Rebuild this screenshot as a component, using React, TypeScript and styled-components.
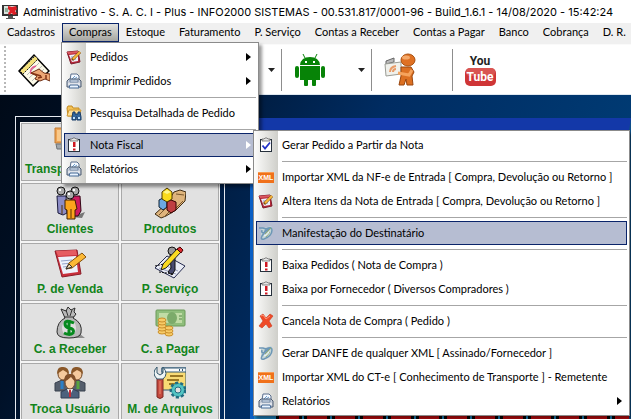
import React from "react";
import styled, { createGlobalStyle, css } from "styled-components";

const Global = createGlobalStyle`
  * { box-sizing: border-box; }
  html, body, #root { height: 100%; }
  body { margin: 0; overflow: hidden; font-family: Lato, "Liberation Sans", sans-serif; font-size: 11px; color: #000; background: #fff; }
  button { font: inherit; color: inherit; margin: 0; cursor: default; }
  ul { list-style: none; margin: 0; padding: 0; }
  svg { display: block; flex: none; }
`;

/* ---------- window ---------- */

const Window = styled.div`
  height: 100%;
  display: flex;
  flex-direction: column;
`;

const TitleBar = styled.header`
  height: 23px;
  display: flex;
  align-items: center;
  gap: 4px;
  padding: 0 2px;
  background: #fff;
`;

const Title = styled.h1`
  margin: 0;
  font: 400 11px/20px Inter, "Open Sans", sans-serif;
  color: #000;
  white-space: nowrap;
`;

const MenuBar = styled.ul`
  height: 21px;
  display: flex;
  background: #f0f0f0;
  white-space: nowrap;
`;

const MenuSlot = styled.li`
  position: relative;
  display: flex;
  align-items: flex-start;
`;

const MenuButton = styled.button<{ $open?: boolean }>`
  height: 19px;
  padding: 0 6px 2px;
  line-height: 16px;
  border: 1px solid transparent;
  background: none;
  ${(p) =>
    p.$open &&
    css`
      border-color: #0a246a;
      background: linear-gradient(#e2e2df, #a5a5a0);
    `}
`;

const ToolBar = styled.div`
  height: 51px;
  flex: none;
  display: flex;
  align-items: center;
  padding-left: 4px;
  background: #fff;
  border-top: 1px solid #fafafa;
  border-bottom: 1px solid #dfe8f0;
`;

const Grip = styled.span`
  width: 2px;
  height: 48px;
  margin-right: 12px;
  background: repeating-linear-gradient(#b8b8b8 0 2px, transparent 2px 4px);
`;

const ToolButton = styled.button`
  display: flex;
  padding: 0;
  border: 0;
  background: none;
`;

const DropButton = styled(ToolButton)<{ $gap: number }>`
  margin-left: ${(p) => p.$gap}px;
`;

const Divider = styled.span<{ $after: number; $before: number }>`
  width: 1px;
  height: 42px;
  margin: 0 ${(p) => p.$after}px 0 ${(p) => p.$before}px;
  background: #8d8d8d;
`;

/* ---------- desktop ---------- */

const Desktop = styled.main`
  flex: 1;
  min-height: 0;
  display: flex;
  padding: 21px 0 0 15px;
  gap: 25px;
  overflow: hidden;
  background: linear-gradient(115deg, #000a18 0%, #001128 18%, #002c62 50%, #00427c 100%);
`;

const Shortcuts = styled.nav`
  width: 210px;
  flex: none;
  padding: 5px 4px 0;
  border: 1px solid #e6eaf0;
  border-bottom: 0;
`;

const ShortcutGrid = styled.div`
  display: grid;
  grid-template-columns: 1fr 1fr;
  grid-auto-rows: 58px;
  gap: 2px;
  padding: 1px;
  background: #f4f4f4;
`;

const Shortcut = styled.button`
  display: flex;
  flex-direction: column;
  align-items: center;
  justify-content: space-between;
  padding: 2px 3px 3px;
  border: 1px solid #a9a9a9;
  background: #e1e1e1;
  color: #12841a;
  font: 700 12px/16px "Liberation Sans", Arial, sans-serif;
  white-space: nowrap;
`;

const ShortcutLabel = styled.span<{ $start?: boolean }>`
  align-self: ${(p) => (p.$start ? "flex-start" : "center")};
`;

const ChildWindow = styled.section`
  flex: 1;
  min-width: 0;
  margin-top: 2px;
  display: flex;
  flex-direction: column;
  justify-content: flex-end;
  border-top: 12px solid #1338a8;
  border-left: 4px solid #0b5fc4;
  border-right: 2px solid #0d4f88;
  background: #1d84c0;
`;

const RedStrip = styled.div`
  height: 5px;
  margin-left: 22px;
  background: repeating-linear-gradient(90deg, #000 0 3px, #c30d10 3px 23px, #000 23px 26px, #1d84c0 26px 28px);
`;

/* ---------- pop-up menus ---------- */

const Popup = styled.ul<{ $sub?: boolean }>`
  position: absolute;
  z-index: 2;
  top: ${(p) => (p.$sub ? "-3px" : "19px")};
  left: ${(p) => (p.$sub ? "189px" : "-1px")};
  width: ${(p) => (p.$sub ? "377px" : "198px")};
  padding: 2px;
  border: 1px solid #8b8b8b;
  background: linear-gradient(90deg, #fcfcfb 0, #cfcfca 24px, #fff 24px);
  box-shadow: 3px 3px 3px rgba(0, 0, 0, 0.4);
`;

const Entry = styled.li`
  position: relative;
`;

const EntryButton = styled.button<{ $active?: boolean }>`
  width: 100%;
  height: 24px;
  display: flex;
  align-items: center;
  gap: 8px;
  padding: 0 4px 0 1px;
  border: 1px solid transparent;
  background: none;
  text-align: left;
  white-space: nowrap;
  ${(p) =>
    p.$active &&
    css`
      border-color: #0a246a;
      background: #b6bdd2;
    `}
`;

const EntryText = styled.span`
  flex: 1;
  padding-bottom: 2px;
`;

const Rule = styled.li`
  height: 8px;
  padding: 4px 0 0 26px;
  &::before {
    content: "";
    display: block;
    height: 1px;
    background: #a6a6a6;
  }
`;

/* ---------- small icons, 16px ---------- */

const Small = ({ children }: { children: React.ReactNode }) => (
  <svg width="16" height="16" viewBox="0 0 16 16" aria-hidden="true">{children}</svg>
);

const EditIcon = () => (
  <Small>
    <path d="M1 3 12 2 14 13 5 15z" fill="#b9283a" stroke="#7d1c2c" />
    <path d="M3 6 12 5 12 12 6 13z" fill="#eef1fa" />
    <path d="M5 8h5M6 10h4" stroke="#8593c0" />
    <path d="M1 3 12 2 12 4 2 5z" fill="#db5960" />
    <path d="M6 11 14 3" stroke="#7b4a10" strokeWidth="3" />
    <path d="M7 10 14 3" stroke="#f9b93b" strokeWidth="2" />
  </Small>
);

const PrinterIcon = () => (
  <Small>
    <path d="M4 7 5 1h6l2 2v5" fill="#f5f9ff" stroke="#5a6e8c" />
    <path d="M6 6l3-3M7 7l4-3" stroke="#6a9ccc" />
    <path d="M1 8 3 6h10l2 2v6H1z" fill="#c5ccd8" stroke="#4b5a70" />
    <path d="M4 7h8v2H4z" fill="#e9f2ff" stroke="#7085a0" />
    <path d="M2 11h12" stroke="#fff" />
    <path d="M4 12h8l1 3H3z" fill="#eaf4ff" stroke="#476a96" />
  </Small>
);

const SearchFolderIcon = () => (
  <Small>
    <path d="M1 3 2 1h4l1 2h6v8H2z" fill="#f3c257" stroke="#c58a1f" />
    <path d="M1 11 3 5h12l-2 6z" fill="#ffe09a" stroke="#d19a33" />
    <path d="M7 7h2v2h3V7h2l1 5v3h-4v-3h-1v3H6v-3z" fill="#34679c" stroke="#173c68" />
    <path d="M7 12h2v2H7zM12 12h2v2h-2z" fill="#bfe0fa" />
  </Small>
);

const ClipboardBase = () => (
  <>
    <rect x="2.5" y="2.5" width="11" height="12" fill="#fff" stroke="#26303c" />
    <path d="M4 4V2h2l1-1h2l1 1h2v2z" fill="#e6e6e6" stroke="#555" strokeWidth=".7" />
  </>
);

const AlertIcon = () => (
  <Small>
    <ClipboardBase />
    <path d="M7 5h2.500v5H7zM7 11.500h2.500v2H7z" fill="#d01822" />
  </Small>
);

const CheckIcon = () => (
  <Small>
    <ClipboardBase />
    <path d="M4.500 8.500 7 11.500 12 5.500" fill="none" stroke="#2434c8" strokeWidth="1.800" />
  </Small>
);

const XmlIcon = () => (
  <Small>
    <rect y="3" width="16" height="11" fill="#f0711a" />
    <rect y="3" width="16" height="1" fill="#f99b51" />
    <text x="8" y="11" textAnchor="middle" fontFamily="Liberation Sans, sans-serif" fontSize="7" fontWeight="700" fill="#fff">XML</text>
  </Small>
);

const NfeIcon = () => (
  <Small>
    <path d="M3 4 13 1 15 4 12 12 5 15 3 10z" fill="#c4d6d7" />
    <path d="M1 3h4l3 1-2 4q-3 0-2-3M8 4q6-3 6 1 0 6-8 9-4 1-2-3 3-5 9-8" fill="none" stroke="#6d97b6" strokeWidth="1.500" />
    <path d="M7 9 13 3M8 12l4-5" stroke="#93ac75" />
    <path d="M6 11q4-1 5-4" fill="none" stroke="#f4f8f8" />
  </Small>
);

const CancelIcon = () => (
  <Small>
    <path d="M2 3 5 1 8 5 12 1 15 3 11 8 14 13 11 15 8 11 4 15 1 13 5 8z" fill="#ef4a27" stroke="#c9371d" strokeWidth=".6" />
    <path d="M3 3 5 2 8 6 12 3" fill="none" stroke="#ff9577" />
  </Small>
);

const SubArrow = ({ light }: { light?: boolean }) => (
  <svg width="5" height="8" viewBox="0 0 5 8" aria-hidden="true">
    <path d="M0 0 5 4 0 8z" fill={light ? "#fff" : "#000"} />
  </svg>
);

const DropArrow = () => (
  <svg width="7" height="4" viewBox="0 0 7 4" aria-hidden="true">
    <path d="M0 0h7L3.500 4z" fill="#222" />
  </svg>
);

/* ---------- large icons, 32px ---------- */

const Large = ({ children }: { children: React.ReactNode }) => (
  <svg width="32" height="34" viewBox="0 0 32 34" aria-hidden="true">{children}</svg>
);

const AppIcon = () => (
  <svg width="17" height="16" viewBox="0 0 17 16" aria-hidden="true">
    <path d="M0 1h16v11H0z" fill="#333" />
    <path d="M2 2h12v8H2z" fill="#d9e2dd" />
    <path d="M3 4h3v4H3z" fill="#8fae9a" />
    <path d="M6 2 10 3 14 2 15 5 13 7 15 10 11 11 10 9 7 11 6 9 8 7 6 5z" fill="#dc1e25" />
    <path d="M6 12h5v2h2v1H4v-1h2z" fill="#555" />
  </svg>
);

const NotepadIcon = () => (
  <Large>
    <path d="M1 18 16 2 31 18 15 33z" fill="#fdfbe8" stroke="#000" strokeWidth="1.500" />
    <path d="M2 18 17 3 20 6 5 21z" fill="#f3e07b" stroke="#222" strokeDasharray="2 1" />
    <path d="M9 22 21 10M11 25 24 13M14 28 26 16" stroke="#b9b9b9" />
    <path d="M13 21Q11 15 18 13" fill="none" stroke="#e55c92" strokeWidth="1.500" />
    <path d="M13 20 21 16 26 20 32 21v7l-5-2-5 2-5-2 2-3z" fill="#eda775" stroke="#6e2e14" />
    <path d="M13 20 23 23M20 25l4-1M28 22v4" stroke="#843414" strokeWidth="1.500" />
  </Large>
);

const AndroidIcon = () => (
  <Large>
    <g fill="#078307">
      <path d="M6 12Q7 4 16 4T26 12zM6 13h20v14H6z" />
      <rect x="1" y="13" width="4" height="12" rx="2" />
      <rect x="27" y="13" width="4" height="12" rx="2" />
      <rect x="10" y="24" width="4" height="9" rx="1" />
      <rect x="18" y="24" width="4" height="9" rx="1" />
    </g>
    <path d="M11 5 9 1M21 5l2-4" stroke="#078307" />
    <path d="M11 8h2v2h-2zM19 8h2v2h-2z" fill="#fff" />
  </Large>
);

const ReaderIcon = () => (
  <svg width="34" height="34" viewBox="0 0 34 34" aria-hidden="true">
    <path d="M3 8 11 5v4L3 11z" fill="#bbb" stroke="#666" />
    <path d="M2 11 18 9v12L3 23z" fill="#f0f1ec" stroke="#9b9d96" />
    <path d="M7 19q0-5 6-6M10 19q0-3 3-3" stroke="#e99c68" fill="none" strokeWidth="2" />
    <path d="M18 14h10l3 5-2 4 1 9h-6l-1-6-2 6h-5l2-9z" fill="#dc7022" stroke="#99460e" />
    <path d="M29 17 26 22 15 20" fill="none" stroke="#f5a35d" strokeWidth="3" />
    <ellipse cx="25" cy="7" rx="7" ry="6" fill="#df7124" stroke="#a8500f" />
    <ellipse cx="23" cy="4.500" rx="4" ry="2" fill="#f5a96a" />
  </svg>
);

const YoutubeIcon = () => (
  <svg width="33" height="34" viewBox="0 0 33 34" role="img" aria-label="YouTube">
    <rect x="1" y="15" width="31" height="18" rx="5" fill="#cf3536" />
    <rect x="2" y="15" width="29" height="8" rx="4" fill="#e06a65" opacity=".6" />
    <g textAnchor="middle" fontFamily="Roboto, sans-serif" fontWeight="700">
      <text x="16" y="12" fontSize="12" fill="#222">You</text>
      <text x="16" y="28" fontSize="12" fill="#fff">Tube</text>
    </g>
  </svg>
);

const CarrierIcon = () => (
  <Large>
    <path d="M1 2h12v15H1z" fill="#eda456" stroke="#c27a30" />
    <path d="M3 4h8v11H3z" fill="#f9c98a" />
    <path d="M2 18h7v5H3z" fill="#a2a8ad" stroke="#6d7377" />
    <circle cx="20" cy="10" r="6" fill="#f2ae62" stroke="#9d5b2e" />
    <path d="M11 30q0-13 9-13t9 13z" fill="#6d86ad" stroke="#3e4f70" />
  </Large>
);

const ClientsIcon = () => (
  <Large>
    <path d="M17 31 31 26 28 32z" fill="#777" />
    <path d="M3 10h9l1 17-4 2-5-2z" fill="#8c8cc6" stroke="#18183a" />
    <path d="M17 10h9l1 15-3 5h-7z" fill="#cf1b60" stroke="#350818" />
    <path d="M11 14h10l2 9-2 1v9h-8v-9l-2-1z" fill="#fca51c" stroke="#422000" />
    <path d="M17 23v9M8 19v9" stroke="#553000" />
    <g fill="#aaa" stroke="#111">
      <circle cx="7" cy="5" r="4" /><circle cx="21" cy="5" r="4" /><circle cx="16" cy="9" r="4" />
    </g>
    <path d="M5 3h2v2H5zM19 3h2v2h-2zM14 7h2v2h-2z" fill="#fff" />
  </Large>
);

const ProductsIcon = () => (
  <Large>
    <path d="M1 28 12 18 20 6 26 4 32 6 31 15 22 24 12 30 7 32z" fill="#deb47c" stroke="#3e2c14" />
    <path d="M5 29l7-7M10 31l8-8M22 8l8 1M22 22l7-7" stroke="#79572d" />
    <path d="M5 14 9 12 13 14v7l-4 3-4-3z" fill="#6ba9e2" stroke="#123" />
    <path d="M13 16 17 14 22 16v8l-5 3-4-3z" fill="#bf3f42" stroke="#300" />
    <path d="M8 6 13 2 18 6v7l-5 3-5-3z" fill="#fadb1d" stroke="#4f3a00" />
    <path d="M9 6 13 4l4 2-4 2z" fill="#fff68c" />
  </Large>
);

const OrderIcon = () => (
  <Large>
    <path d="M1 5 23 4 27 28 8 31z" fill="#c92f3b" stroke="#8b1c28" />
    <path d="M4 11 22 10 24 26 9 28z" fill="#edf2fb" />
    <path d="M7 15 18 14M8 18l10-1M9 21l8-1" stroke="#94a5ca" />
    <path d="M2 5 22 4 23 9 4 10z" fill="#e55c62" />
    <path d="M12 23 15 17 28 7l4 4-14 11z" fill="#fcb936" stroke="#84500c" />
    <path d="M12 23 15 18l3 3z" fill="#f4dcb3" stroke="#333" />
  </Large>
);

const ServiceIcon = () => (
  <Large>
    <path d="M1 22 13 10 31 20 20 32z" fill="#e9ecf5" stroke="#252b50" />
    <path d="M5 22 22 28M8 18l16 7" stroke="#9aa1c0" />
    <path d="M16 9 21 12v12l-3 5-4-3 3-4z" fill="#484b70" stroke="#111" />
    <circle cx="18" cy="5" r="4" fill="#999" stroke="#111" />
    <path d="M7 24 9 18 23 3l4 3-15 16z" fill="#fada21" stroke="#222" />
    <path d="M23 3l3-2 3 3-2 3z" fill="#de2b31" stroke="#400" />
    <path d="M1 20l9-2M5 26l15 2" stroke="#111" strokeDasharray="2 1" />
  </Large>
);

const MoneyBagIcon = () => (
  <Large>
    <path d="M8 32h23l-5-4z" fill="#8d8d8d" />
    <path d="M11 12 7 3 12 5 14 1 17 4 21 2 20 6 22 8 19 12Q29 17 27 27 26 32 15 32 3 32 3 26 3 16 11 12z" fill="#b8b8b8" stroke="#2c2c2c" />
    <path d="M10 11h10M12 4l2 6M18 4l-2 6" stroke="#333" />
    <ellipse cx="15" cy="22" rx="7" ry="8" fill="#dedede" />
    <path d="M20 17q-9-4-9 1 0 3 4 4 6 1 4 5-3 3-9 0M15 14v16" fill="none" stroke="#06891e" strokeWidth="3" />
  </Large>
);

const CashIcon = () => (
  <Large>
    <rect x="2" y="4" width="29" height="16" rx="1" fill="#8fbe7c" stroke="#6b9959" />
    <rect x="5" y="7" width="23" height="10" fill="#c0dca6" />
    <ellipse cx="18" cy="12" rx="5" ry="6" fill="#7cab6a" />
    <path d="M25 10h3M25 13h3" stroke="#568648" />
    <g fill="#f7cb67" stroke="#c98e2b">
      {[24, 21, 18, 15, 12].map((y) => <ellipse key={y} cx="8" cy={y + 2} rx="4" ry="2" />)}
      {[26, 23, 20].map((y) => <ellipse key={y} cx="15" cy={y + 2} rx="4" ry="2" />)}
    </g>
  </Large>
);

const UsersIcon = () => (
  <Large>
    <path d="M1 25v-8l7-3 8 3 8-3 7 3v8z" fill="#555e6c" stroke="#39404d" />
    <path d="M8 15v8" stroke="#2b7fc6" strokeWidth="3" />
    <path d="M24 15v8" stroke="#58a33e" strokeWidth="3" />
    <g fill="#f5c99d" stroke="#704625">
      <ellipse cx="9" cy="8" rx="5" ry="6" /><ellipse cx="23" cy="8" rx="5" ry="6" />
    </g>
    <path d="M3 8q0-8 6-7 6 0 6 7-4-3-6-4-3 2-6 4zM17 8q0-8 6-7 6 0 6 7-3-3-6-4-3 2-6 4z" fill="#8b5829" />
    <path d="M7 32v-6l6-3h6l6 3v6z" fill="#4c617d" stroke="#303e54" />
    <path d="M13 23h6l-3 6z" fill="#fff" /><path d="M16 24v7" stroke="#c62c37" strokeWidth="2" />
    <ellipse cx="16" cy="16" rx="5" ry="7" fill="#f8d0a5" stroke="#704625" />
    <path d="M10 16q0-9 6-8 6-1 6 8-3-2-5-5-3 3-7 5z" fill="#82502a" />
  </Large>
);

const FilesIcon = () => (
  <Large>
    <rect x="8" y="2" width="24" height="22" fill="#f8db75" stroke="#315974" />
    <path d="M8 2h24v4H8z" fill="#f8fafa" stroke="#315974" />
    <path d="M25 4h1M28 4h1" stroke="#315974" strokeWidth="2" />
    <path d="M16 10h13M13 14h12M15 18h10" stroke="#9a7823" strokeWidth="2" />
    <path d="M3 12h6v19q-3 3-6 0z" fill="#c4493e" stroke="#7c2924" />
    <path d="M6 15v13" stroke="#ed8a72" />
    <path d="M3 1v6l3 2 3-2V1q6 7 0 12H3q-6-6 0-12z" fill="#eef4f4" stroke="#34576c" />
    <circle cx="24" cy="24" r="7" fill="#3aafb4" stroke="#216c81" strokeWidth="3" strokeDasharray="3 2" />
    <circle cx="24" cy="24" r="6" fill="#52c4c3" />
    <circle cx="24" cy="24" r="3" fill="#e1e1e1" stroke="#216c81" />
  </Large>
);

/* ---------- data ---------- */

type Item = { text: string; icon: () => React.JSX.Element; active?: boolean; arrow?: boolean; sub?: (Item | null)[] };

const notaFiscal: (Item | null)[] = [
  { text: "Gerar Pedido a Partir da Nota", icon: CheckIcon },
  null,
  { text: "Importar XML da NF-e de Entrada [ Compra, Devolução ou Retorno ]", icon: XmlIcon },
  { text: "Altera Itens da Nota de Entrada [ Compra, Devolução ou Retorno ]", icon: EditIcon },
  null,
  { text: "Manifestação do Destinatário", icon: NfeIcon, active: true },
  null,
  { text: "Baixa Pedidos ( Nota de Compra )", icon: AlertIcon },
  { text: "Baixa por Fornecedor ( Diversos Compradores )", icon: AlertIcon },
  null,
  { text: "Cancela Nota de Compra ( Pedido )", icon: CancelIcon },
  null,
  { text: "Gerar DANFE de qualquer XML [ Assinado/Fornecedor ]", icon: NfeIcon },
  { text: "Importar XML do CT-e [ Conhecimento de Transporte ] - Remetente", icon: XmlIcon },
  { text: "Relatórios", icon: PrinterIcon, arrow: true },
];

const compras: (Item | null)[] = [
  { text: "Pedidos", icon: EditIcon, arrow: true },
  { text: "Imprimir Pedidos", icon: PrinterIcon, arrow: true },
  null,
  { text: "Pesquisa Detalhada de Pedido", icon: SearchFolderIcon },
  null,
  { text: "Nota Fiscal", icon: AlertIcon, active: true, arrow: true, sub: notaFiscal },
  { text: "Relatórios", icon: PrinterIcon, arrow: true },
];

const menus = ["Cadastros", "Compras", "Estoque", "Faturamento", "P. Serviço", "Contas a Receber", "Contas a Pagar", "Banco", "Cobrança", "D. R."];

const shortcuts = [
  { text: "Transp", icon: CarrierIcon, start: true },
  { text: "", icon: CarrierIcon },
  { text: "Clientes", icon: ClientsIcon },
  { text: "Produtos", icon: ProductsIcon },
  { text: "P. de Venda", icon: OrderIcon },
  { text: "P. Serviço", icon: ServiceIcon },
  { text: "C. a Receber", icon: MoneyBagIcon },
  { text: "C. a Pagar", icon: CashIcon },
  { text: "Troca Usuário", icon: UsersIcon },
  { text: "M. de Arquivos", icon: FilesIcon },
];

function PopupMenu({ items, sub }: { items: (Item | null)[]; sub?: boolean }) {
  return (
    <Popup $sub={sub} role="menu">
      {items.map((it, i) =>
        it ? (
          <Entry key={i} role="none">
            <EntryButton $active={it.active} role="menuitem">
              <it.icon />
              <EntryText>{it.text}</EntryText>
              {it.arrow && <SubArrow light={it.active} />}
            </EntryButton>
            {it.sub && <PopupMenu items={it.sub} sub />}
          </Entry>
        ) : (
          <Rule key={i} role="separator" />
        )
      )}
    </Popup>
  );
}

export default function App() {
  return (
    <Window>
      <Global />
      <TitleBar>
        <AppIcon />
        <Title>Administrativo - S. A. C. I - Plus - INFO2000 SISTEMAS - 00.531.817/0001-96 - Build_1.6.1 - 14/08/2020 - 15:42:24</Title>
      </TitleBar>
      <MenuBar role="menubar">
        {menus.map((m) => (
          <MenuSlot key={m} role="none">
            <MenuButton role="menuitem" $open={m === "Compras"}>{m}</MenuButton>
            {m === "Compras" && <PopupMenu items={compras} />}
          </MenuSlot>
        ))}
      </MenuBar>
      <ToolBar>
        <Grip />
        <ToolButton aria-label="Anotações"><NotepadIcon /></ToolButton>
        <DropButton $gap={218} aria-label="Mais opções"><DropArrow /></DropButton>
        <Divider $before={6} $after={12} />
        <ToolButton aria-label="Android"><AndroidIcon /></ToolButton>
        <DropButton $gap={32} aria-label="Opções do Android"><DropArrow /></DropButton>
        <Divider $before={6} $after={11} />
        <ToolButton aria-label="Notícias"><ReaderIcon /></ToolButton>
        <Divider $before={35} $after={11} />
        <ToolButton aria-label="YouTube"><YoutubeIcon /></ToolButton>
      </ToolBar>
      <Desktop>
        <Shortcuts>
          <ShortcutGrid>
            {shortcuts.map((s, i) => (
              <Shortcut key={i}>
                <s.icon />
                <ShortcutLabel $start={s.start}>{s.text}</ShortcutLabel>
              </Shortcut>
            ))}
          </ShortcutGrid>
        </Shortcuts>
        <ChildWindow>
          <RedStrip />
        </ChildWindow>
      </Desktop>
    </Window>
  );
}
